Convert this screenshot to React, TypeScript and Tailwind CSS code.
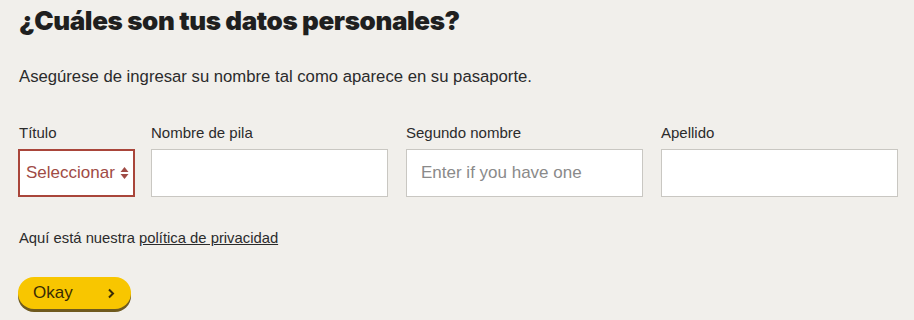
import React from 'react';

const Field: React.FC<{ label: string; placeholder?: string }> = ({ label, placeholder }) => (
    <div className="flex flex-col w-[237px] shrink-0">
        <label className="text-[15px] leading-[18px] text-[#2b2b2b] mb-[7px]">{label}</label>
        <input
            type="text"
            placeholder={placeholder}
            className="h-[48px] w-full bg-white border border-[#c9c7c2] px-[14px] text-[17px] text-[#333] placeholder:text-[#8a8a8a] outline-none"
        />
    </div>
);

export default function App() {
    return (
        <div className="min-h-[320px] w-full bg-[#f1efeb] px-[19px] pt-[5px] font-['Liberation_Sans',Arial,sans-serif] text-[#2b2b2b] overflow-hidden">
            <h1 className="font-['Inter',sans-serif] font-black text-[26px] leading-[32px] tracking-[-0.4px] text-[#1f1f1f]">
                ¿Cuáles son tus datos personales?
            </h1>
            <p className="mt-[30px] text-[16.7px] leading-[20px]">
                Asegúrese de ingresar su nombre tal como aparece en su pasaporte.
            </p>
            <div className="mt-[37px] flex">
                <div className="flex flex-col w-[117px] shrink-0 -ml-[1px] mr-[16px]">
                    <label className="text-[15px] leading-[18px] text-[#2b2b2b] mb-[7px] ml-[1px]">Título</label>
                    <div className="h-[48px] border-2 border-[#a9453a] bg-white flex items-center justify-between pl-[6px] pr-[4px]">
                        <span className="text-[17px] text-[#a04b45]">Seleccionar</span>
                        <svg width="9" height="14" viewBox="0 0 9 14" className="text-[#a04b45]">
                            <path d="M4.5 1 L8.5 6 L0.5 6 Z" fill="currentColor" />
                            <path d="M4.5 13 L8.5 8 L0.5 8 Z" fill="currentColor" />
                        </svg>
                    </div>
                </div>
                <div className="flex gap-[18px]">
                    <Field label="Nombre de pila" />
                    <Field label="Segundo nombre" placeholder="Enter if you have one" />
                    <Field label="Apellido" />
                </div>
            </div>
            <p className="mt-[32px] text-[14.8px] leading-[18px]">
                Aquí está nuestra <a href="#" className="underline">política de privacidad</a>
            </p>
            <button className="mt-[30px] -ml-[1px] w-[113px] h-[32px] rounded-full bg-[#f8c600] shadow-[0_3px_0_#6f5a1e] flex items-center justify-between pl-[15px] pr-[16px] text-[#3a2c05]">
                <span className="text-[17px]">Okay</span>
                <svg width="8" height="11" viewBox="0 0 8 11">
                    <path d="M2 1.5 L6 5.5 L2 9.5" fill="none" stroke="currentColor" strokeWidth="2" />
                </svg>
            </button>
        </div>
    );
}
